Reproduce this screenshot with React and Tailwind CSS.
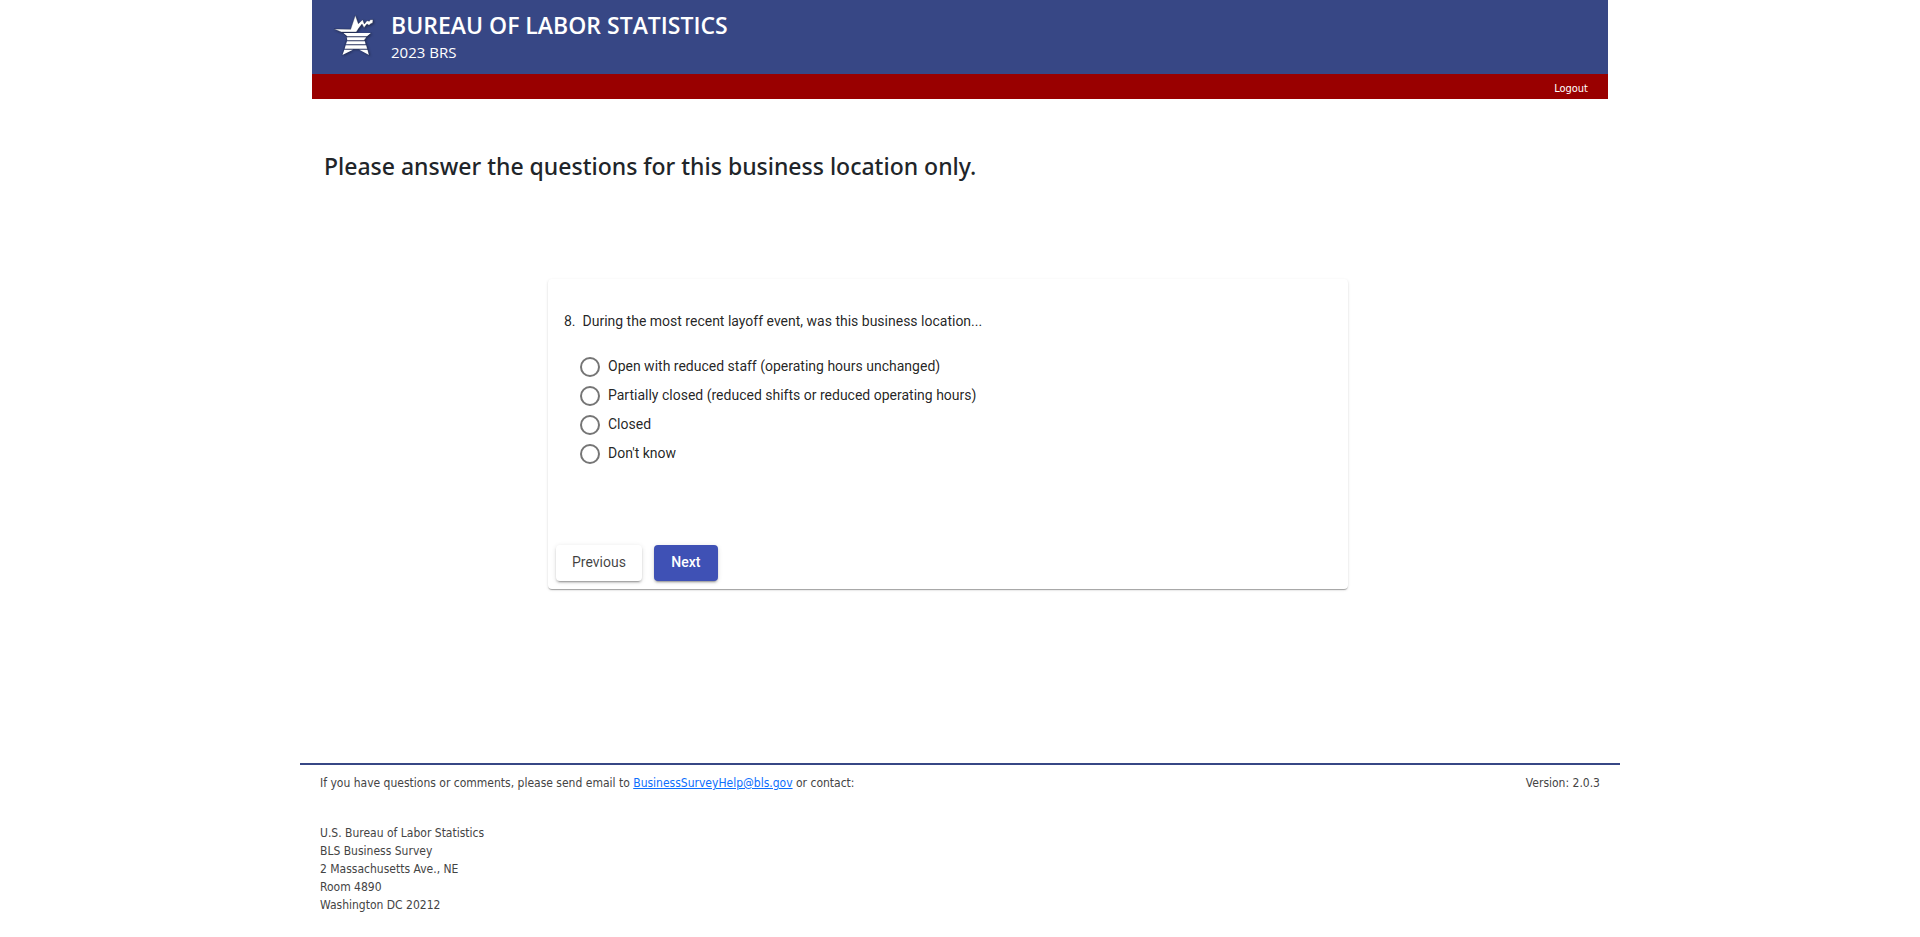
import { useState } from 'react';

const options = [
    { value: 'open', label: 'Open with reduced staff (operating hours unchanged)' },
    { value: 'partial', label: 'Partially closed (reduced shifts or reduced operating hours)' },
    { value: 'closed', label: 'Closed' },
    { value: 'unknown', label: "Don't know" },
];

const address = [
    'U.S. Bureau of Labor Statistics',
    'BLS Business Survey',
    '2 Massachusetts Ave., NE',
    'Room 4890',
    'Washington DC 20212',
];

const StarLogo = () => (
    <svg viewBox="0 0 120 126" className="w-10 h-[42px] drop-shadow-[1px_1px_1px_rgba(0,0,0,0.4)]" aria-hidden="true">
        {/* Upper half of the star, ending in the chart line */}
        <path
            fill="#fff"
            stroke="#1c2340"
            strokeWidth="1"
            d="M0 42 L50 43 L64 1 L73 26 L86 14 L91 27 L99 17 L106 19 L109 14 L117 14 L116 24 L110 26 L105 31 L99 27 L90 38 L84 27 L74 40 L67 51 L22 51 Z"
        />
        {/* Stripes and legs */}
        <g fill="#fff">
            <path d="M28 54 H111 L99 64 H40 Z" />
            <path d="M38 67 H97 L91 76 H40 Z" />
            <path d="M39 79 H93 L95 88 H36 Z" />
            <path d="M35 91 H97 L100 101 H32 Z" />
            <path d="M31 104 H57 L25 120 Z M76 104 H101 L105 120 Z" />
        </g>
        <path fill="none" stroke="#1c2340" strokeWidth="1" d="M26 53 L39 66 L24 121 M113 53 L92 72 L106 121" />
    </svg>
);

const App = () => {
    const [answer, setAnswer] = useState('');

    return (
        <div className="max-w-[1320px] mx-auto font-['Open_Sans',sans-serif] text-[#212529]">
            <header className="mx-3">
                <div className="flex items-start h-[74px] bg-[#374785] text-white pl-[22px] pt-[15px]">
                    <StarLogo />
                    <div className="ml-[17px] -mt-[7px]">
                        <h1 className="text-[23px] leading-[34px] font-semibold">BUREAU OF LABOR STATISTICS</h1>
                        <p className="text-[15px] leading-5">2023 BRS</p>
                    </div>
                </div>
                <nav className="flex justify-end items-center h-[25px] bg-[#990000] pt-1 px-5">
                    <a href="#logout" className="font-['DejaVu_Sans_Condensed','DejaVu_Sans',sans-serif] text-[11px] leading-4 text-white">Logout</a>
                </nav>
            </header>

            <main className="pr-6">
                <h2 className="mt-[50px] pl-6 font-['Noto_Sans',sans-serif] text-[23px] leading-[34px] font-medium">Please answer the questions for this business location only.</h2>

                <form
                    onSubmit={e => e.preventDefault()}
                    className="max-w-[800px] mt-24 mx-auto rounded bg-white font-[Roboto,sans-serif] text-sm text-black/87 shadow-[0_2px_1px_-1px_rgba(0,0,0,0.2),0_1px_1px_0_rgba(0,0,0,0.14),0_1px_3px_0_rgba(0,0,0,0.12)]"
                >
                    <fieldset className="px-4 pt-8">
                        <legend className="float-left w-full leading-5">8.&nbsp; During the most recent layoff event, was this business location...</legend>
                        <div className="clear-both flex flex-col gap-[9px] pt-[26px] pl-4">
                            {options.map(option => (
                                <label key={option.value} className="flex items-start gap-2 leading-[18px]">
                                    <input
                                        type="radio"
                                        name="layoff"
                                        value={option.value}
                                        checked={answer === option.value}
                                        onChange={() => setAnswer(option.value)}
                                        className="appearance-none size-5 rounded-full border-2 border-[#757575] checked:border-[6px] checked:border-[#3f51b5]"
                                    />
                                    {option.label}
                                </label>
                            ))}
                        </div>
                    </fieldset>

                    <div className="flex gap-3 px-2 pb-2 pt-[81px]">
                        <button type="button" className="h-9 px-4 pb-0.5 rounded bg-white text-black/75 shadow-[0_3px_1px_-2px_rgba(0,0,0,0.2),0_2px_2px_0_rgba(0,0,0,0.14),0_1px_5px_0_rgba(0,0,0,0.12)]">
                            Previous
                        </button>
                        <button type="submit" className="h-9 min-w-16 px-4 pb-0.5 rounded bg-[#3f51b5] text-white font-medium shadow-[0_3px_1px_-2px_rgba(0,0,0,0.2),0_2px_2px_0_rgba(0,0,0,0.14),0_1px_5px_0_rgba(0,0,0,0.12)]">
                            Next
                        </button>
                    </div>
                </form>
            </main>

            <footer className="mt-[174px] px-5 pt-[9px] border-t-2 border-[#374785] font-['DejaVu_Sans_Condensed','DejaVu_Sans',sans-serif] text-xs leading-[18px] text-[#444]">
                <div className="flex justify-between">
                    <p>
                        If you have questions or comments, please send email to{' '}
                        <a href="mailto:BusinessSurveyHelp@bls.gov" className="text-[#0d6efd] underline">BusinessSurveyHelp@bls.gov</a> or contact:
                    </p>
                    <p>Version: 2.0.3</p>
                </div>
                <address className="mt-8 not-italic">
                    {address.map(line => (
                        <div key={line}>{line}</div>
                    ))}
                </address>
            </footer>
        </div>
    );
};

export default App;
